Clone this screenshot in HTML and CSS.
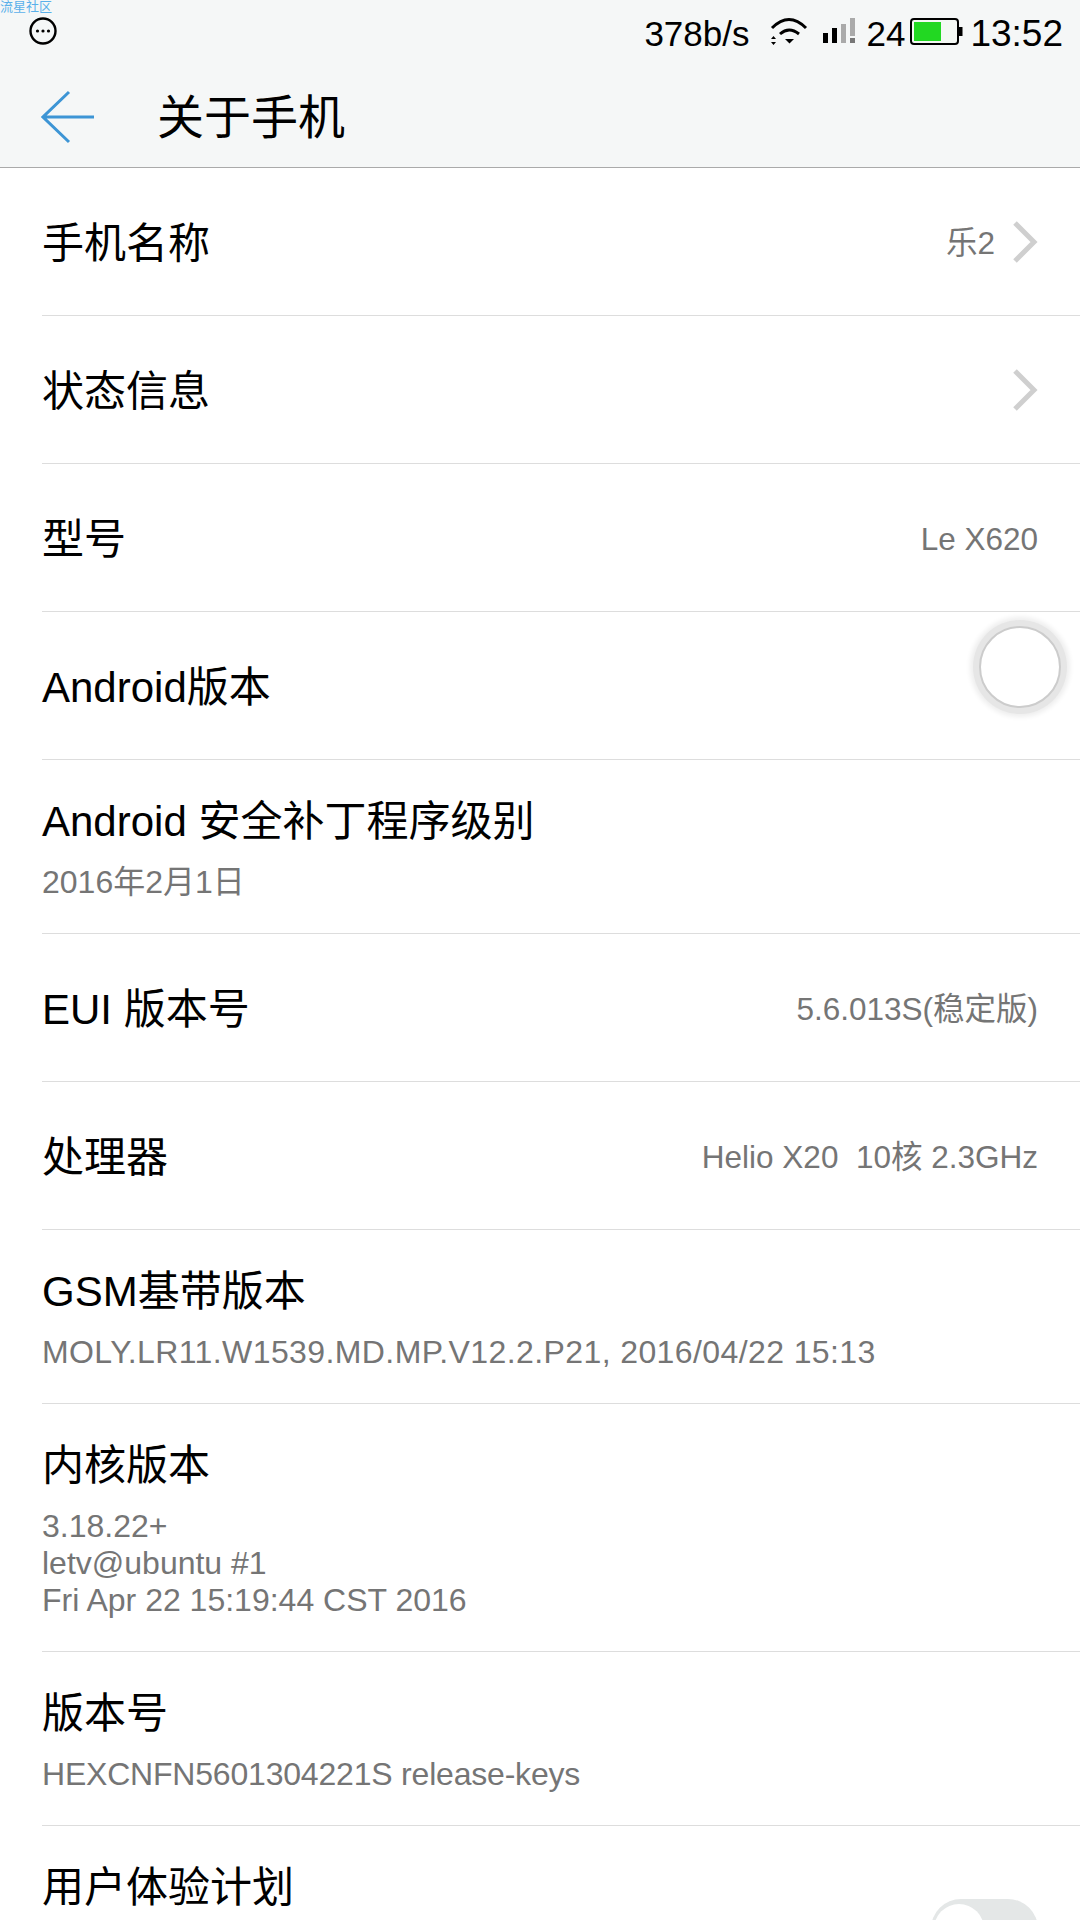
FILE: index.html
```html
<!DOCTYPE html>
<html lang="zh-CN">
<head>
    <meta charset="UTF-8">
    <meta name="viewport" content="width=device-width, initial-scale=1.0">
    <title>关于手机</title>
    <link rel="stylesheet" href="styles.css">
</head>
<body>
    <div class="watermark">流星社区</div>
    <header class="top-bar">
        <div class="status-bar">
            <svg class="chat-icon" width="28" height="28" viewBox="0 0 28 28">
                <circle cx="14" cy="14" r="12.500" fill="none" stroke="#000" stroke-width="2.400"/>
                <circle cx="8.500" cy="14" r="1.600"/>
                <circle cx="14" cy="14" r="1.600"/>
                <circle cx="19.500" cy="14" r="1.600"/>
            </svg>
            <div class="status-right">
                <span class="speed">378b/s</span>
                <svg class="wifi-icon" width="38" height="28" viewBox="0 0 38 28">
                    <path d="M2 10 Q19 -7 36 10" fill="none" stroke="#000" stroke-width="3"/>
                    <path d="M10 16 Q19 8 29 16" fill="none" stroke="#000" stroke-width="3"/>
                    <path d="M15 21 L24 21 L19.500 25.500 Z"/>
                    <path d="M3.500 18 L6 21 L1 21 Z M1 24 L6 24 L3.500 27 Z"/>
                </svg>
                <svg class="signal-icon" width="33" height="28" viewBox="0 0 33 28">
                    <rect x="0" y="15" width="5" height="10"/>
                    <rect x="9" y="10" width="5" height="15"/>
                    <rect x="18" y="6" width="5" height="19" fill="#aaa"/>
                    <rect x="27" y="0" width="5" height="18" fill="#aaa"/>
                    <rect x="27" y="20" width="5" height="5" fill="#777"/>
                </svg>
                <span class="level">24</span>
                <svg class="battery-icon" width="53" height="28" viewBox="0 0 53 28">
                    <rect x="1" y="1" width="47" height="25" rx="3" fill="#f4f8f4" stroke="#000" stroke-width="2"/>
                    <rect x="4" y="4" width="27" height="19" fill="#22d822"/>
                    <rect x="49" y="9" width="3.500" height="9" fill="#000"/>
                </svg>
                <span class="clock">13:52</span>
            </div>
        </div>
        <div class="toolbar">
            <svg class="back-icon" width="54" height="54" viewBox="0 0 54 54">
                <path d="M28 2 L2 27 L28 52 M2 27 L53 27" fill="none" stroke="#3d95d5" stroke-width="3"/>
            </svg>
            <h1>关于手机</h1>
        </div>
    </header>

    <div class="list">
        <div class="row">
            <span class="label">手机名称</span>
            <span class="value">乐2</span>
            <svg class="chevron" width="26" height="42" viewBox="0 0 26 42">
                <path d="M3 2 L22 21 L3 40" fill="none" stroke="#cfcfcf" stroke-width="5"/>
            </svg>
        </div>
        <div class="row">
            <span class="label">状态信息</span>
            <svg class="chevron" width="26" height="42" viewBox="0 0 26 42">
                <path d="M3 2 L22 21 L3 40" fill="none" stroke="#cfcfcf" stroke-width="5"/>
            </svg>
        </div>
        <div class="row">
            <span class="label">型号</span>
            <span class="value">Le X620</span>
        </div>
        <div class="row">
            <span class="label">Android版本</span>
        </div>
        <div class="row stacked">
            <span class="label">Android 安全补丁程序级别</span>
            <span class="sub">2016年2月1日</span>
        </div>
        <div class="row">
            <span class="label">EUI 版本号</span>
            <span class="value">5.6.013S(稳定版)</span>
        </div>
        <div class="row">
            <span class="label">处理器</span>
            <span class="value">Helio X20&nbsp;&nbsp;10核 2.3GHz</span>
        </div>
        <div class="row stacked">
            <span class="label">GSM基带版本</span>
            <span class="sub baseband">MOLY.LR11.W1539.MD.MP.V12.2.P21, 2016/04/22 15:13</span>
        </div>
        <div class="row stacked">
            <span class="label">内核版本</span>
            <span class="sub">3.18.22+<br>letv@ubuntu #1<br>Fri Apr 22 15:19:44 CST 2016</span>
        </div>
        <div class="row stacked">
            <span class="label">版本号</span>
            <span class="sub build">HEXCNFN5601304221S release-keys</span>
        </div>
        <div class="row last">
            <span class="label">用户体验计划</span>
            <div class="switch"><div class="knob"></div></div>
        </div>
    </div>

    <div class="float-ball"></div>
</body>
</html>
```

FILE: styles.css
```css
html, body {
    height: 1920px;
    overflow: hidden;
}
body {
    font-family: "Liberation Sans", "Noto Sans CJK SC", sans-serif;
    margin: 0;
    padding: 0;
    background-color: #fff;
    color: #000;
    position: relative;
}
.watermark {
    position: absolute;
    top: 0;
    left: 0;
    font-size: 13px;
    line-height: 13px;
    color: #5ab0ea;
}
.top-bar {
    height: 167px;
    background-color: #f5f7f7;
    border-bottom: 1px solid #aaa;
}
.status-bar {
    height: 64px;
    display: flex;
    justify-content: space-between;
    padding: 18px 17px 0 29px;
    box-sizing: border-box;
}
.chat-icon {
    margin-top: -1px;
}
.status-right {
    display: flex;
    align-items: flex-start;
    font-size: 35px;
    line-height: 32px;
}
.speed {
    margin-right: 21px;
}
.wifi-icon {
    margin-right: 15px;
}
.signal-icon {
    margin-right: 10px;
}
.level {
    margin-right: 5px;
}
.battery-icon {
    margin-right: 7px;
}
.clock {
    font-size: 37px;
}
.toolbar {
    height: 103px;
    display: flex;
    align-items: center;
    padding-left: 41px;
    padding-top: 2px;
    box-sizing: border-box;
}
.toolbar h1 {
    margin: 0 0 7px 62px;
    font-size: 47px;
    font-weight: normal;
}
.list {
    padding-left: 42px;
}
.row {
    height: 148px;
    box-sizing: border-box;
    border-bottom: 1px solid #ddd;
    display: flex;
    align-items: center;
    padding-top: 4px;
    padding-right: 42px;
}
.row.stacked {
    height: auto;
    flex-direction: column;
    align-items: flex-start;
    padding-top: 33px;
    padding-bottom: 32px;
}
.row.last {
    border-bottom: none;
    align-items: flex-start;
    padding-top: 33px;
}
.label {
    font-size: 42px;
    line-height: 58px;
    margin-right: auto;
}
.value, .sub {
    font-size: 32px;
    line-height: 37px;
    color: #757575;
}
.value {
    font-size: 31.500px;
}
.sub {
    margin-top: 13px;
}
.sub.baseband {
    letter-spacing: 0.400px;
}
.sub.build {
    letter-spacing: -0.200px;
}
.chevron {
    margin-left: 17px;
    margin-top: -4px;
}
.switch {
    width: 107px;
    height: 60px;
    border-radius: 30px;
    background-color: #e4e7e7;
    margin-top: 40px;
}
.knob {
    width: 50px;
    height: 50px;
    border-radius: 50%;
    background-color: #fff;
    margin: 5px 3px;
}
.float-ball {
    position: absolute;
    left: 979px;
    top: 626px;
    width: 82px;
    height: 82px;
    border-radius: 50%;
    background-color: #fff;
    border: 2px solid #ccc;
    box-sizing: border-box;
    box-shadow: 0 0 0 6px #e6e6e6, 0 0 5px 9px #eee;
}
```
